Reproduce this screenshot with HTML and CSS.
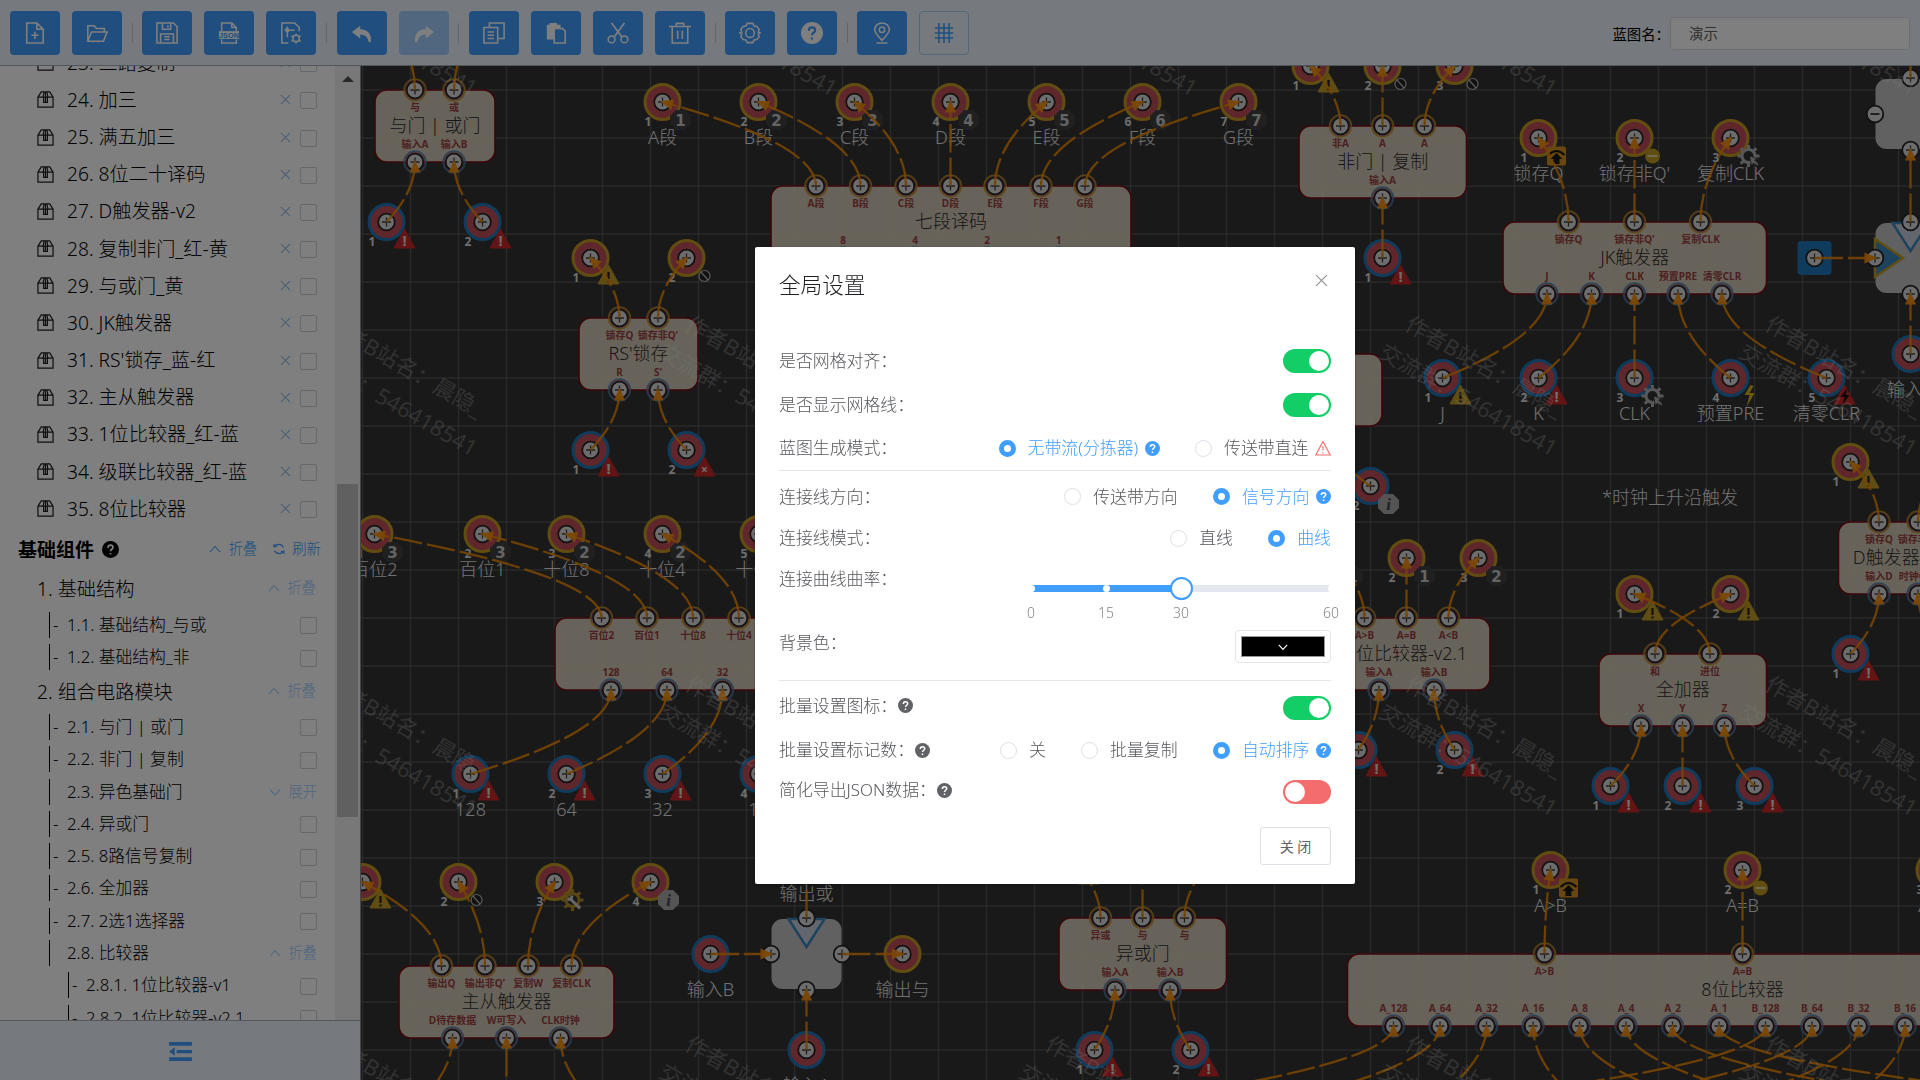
FILE: index.html
```html
<!DOCTYPE html>
<html lang="zh-CN">
<head>
<meta charset="utf-8">
<title>蓝图编辑器</title>
<link rel="stylesheet" href="styles.css">
</head>
<body>
<svg class="sprite" aria-hidden="true">
  <symbol id="i-new" viewBox="0 0 24 24"><path d="M14 1H3v22h18V8zM14 1v7h7M12 10.500v8M8 14.500h8"/></symbol>
  <symbol id="i-open" viewBox="0 0 24 24"><path d="M2 21V4h7l2.500 3H20v4M2 21h17l4-10H6z"/></symbol>
  <symbol id="i-save" viewBox="0 0 24 24"><path d="M1 1h18l4 4v18H1zM7 1v7h9V1M13 3.500v2.500M5 23v-10h14v10M9 16h6M9 19h6"/></symbol>
  <symbol id="i-json" viewBox="0 0 24 24"><path d="M4 10V1h11l5 5v4M15 1v5h5M4 19v4h16v-4"/><path class="solid" d="M1 10h22v8.500H1z"/><text class="json" x="12" y="17" text-anchor="middle">JSON</text></symbol>
  <symbol id="i-sets" viewBox="0 0 24 24"><path d="M9 23H2V1h14l5 5v4M8 5v12M9 9h7M5 9h2"/><circle cx="8" cy="9" r="1.500"/><circle cx="17.500" cy="18" r="3.500"/><path d="M17.500 12.500v2M17.500 21.500v2M12.500 15l2 1.200M20.500 19.800l2 1.200M12.500 21l2-1.200M20.500 16.200l2-1.200"/></symbol>
  <symbol id="i-undo" viewBox="0 0 24 24"><path class="solid" d="M10 4L1 11l9 7v-4.500c6 0 8 3 9.500 8.500h2C23 14 19 8 10 8z"/></symbol>
  <symbol id="i-redo" viewBox="0 0 24 24"><path class="solid" d="M14 4l9 7-9 7v-4.500c-6 0-8 3-9.500 8.500h-2C1 14 5 8 14 8z"/></symbol>
  <symbol id="i-copy" viewBox="0 0 24 24"><path d="M1 6h15v17H1zM7 6V1h16v17h-7M5 11h7M5 14.500h7M5 18h7"/></symbol>
  <symbol id="i-paste" viewBox="0 0 24 24"><path class="solid" d="M2 3h3V1h8v2h4v3.500h-7V19H2z"/><path d="M10 7h9l3 3v13H10z"/></symbol>
  <symbol id="i-cut" viewBox="0 0 24 24"><path d="M5 1l11 15M19 1L8 16"/><circle cx="5" cy="19" r="3.700"/><circle cx="19" cy="19" r="3.700"/></symbol>
  <symbol id="i-trash" viewBox="0 0 24 24"><path d="M0 5h24M8 5V1.500h8V5M3.500 5v18h17V5M9.500 9.500v9M14.500 9.500v9"/></symbol>
  <symbol id="i-gear" viewBox="0 0 24 24"><path d="M9 1.500h6l1.500 3 3 .5L22 8l-1 3 2 1-2 1 1 3-2.500 3-3 .5-1.500 3H9l-1.500-3-3-.5L2 16l1-3-2-1 2-1-1-3 2.500-3 3-.5z"/><ellipse cx="12" cy="12" rx="4.700" ry="5"/></symbol>
  <symbol id="i-help" viewBox="0 0 24 24"><circle class="solid" cx="12" cy="12" r="12"/><path class="cut" d="M8.500 9.500c0-5 7-4.500 7-.5 0 2.500-3.500 2.800-3.500 5.500M12 16.800v2.400"/></symbol>
  <symbol id="i-pin" viewBox="0 0 24 24"><path d="M12 20C7 15 4 12 4 8.500a8 7.500 0 0 1 16 0C20 12 17 15 12 20zM6 23h12"/><circle cx="12" cy="8.500" r="3"/></symbol>
  <symbol id="i-grid" viewBox="0 0 24 24"><path d="M2 6.500h20M2 12h20M2 17.500h20M6.500 1v22M12 1v22M17.500 1v22"/></symbol>
  <symbol id="i-box" viewBox="0 0 18 18"><path d="M1 6.500L4.500 1h9L17 6.500V17H1zM1 6.500h16M6.500 6.500L7.500 1M11.500 6.500l-1-5.500M7 6.500v5.500h4V6.500M9 1v11"/></symbol>
  <symbol id="i-x" viewBox="0 0 12 12"><path d="M1 1l10 10M11 1L1 11"/></symbol>
  <symbol id="i-up" viewBox="0 0 12 12"><path d="M1 9l5-5.500L11 9"/></symbol>
  <symbol id="i-down" viewBox="0 0 12 12"><path d="M1 3.500L6 9l5-5.500"/></symbol>
  <symbol id="i-refresh" viewBox="0 0 12 12"><path d="M1 1v3.500M1 4.500a5.200 5.200 0 0 1 9.500 0M1 3.500h3M11 11V7.500M11 7.500a5.200 5.200 0 0 1-9.500 0M11 8.500H8"/></symbol>
  <symbol id="i-warn" viewBox="0 0 16 16"><path d="M8 1.500L15.200 15H.8zM8 6v4.500M8 12v1.200"/></symbol>
  <symbol id="i-fold" viewBox="0 0 24 20"><path class="solid" d="M0 0h24v4H0zM8 8.300h16v3.500H8zM0 16h24v4H0zM0 10l6-4.500v9z"/></symbol>
</svg>

<div class="app">
  <header class="toolbar">
    <div class="tools" id="tools"></div>
    <label class="name">蓝图名：<span class="name-input">演示</span></label>
  </header>
  <main class="main">
    <aside class="sidebar">
      <div class="side-body">
        <div class="list" id="list"></div>
        <div class="scroll"><span class="scroll-up"></span><span class="scroll-thumb"></span></div>
      </div>
      <footer class="side-foot"><svg class="fold"><use href="#i-fold"/></svg></footer>
    </aside>
    <svg class="board" id="board" viewBox="361 66 1559 1014"></svg>
  </main>
</div>

<div class="overlay">
  <section class="dialog">
    <div class="dlg-head"><h2>全局设置</h2><svg class="close"><use href="#i-x"/></svg></div>
    <div class="row r1"><span class="lab">是否网格对齐：</span><span class="switch"></span></div>
    <div class="row r2"><span class="lab">是否显示网格线：</span><span class="switch"></span></div>
    <div class="row r3"><span class="lab">蓝图生成模式：</span>
      <div class="opts">
        <span class="opt on"><i></i>无带流(分拣器)<svg class="q"><use href="#i-help"/></svg></span>
        <span class="opt"><i></i>传送带直连<svg class="w"><use href="#i-warn"/></svg></span>
      </div></div>
    <hr>
    <div class="row r4"><span class="lab">连接线方向：</span>
      <div class="opts">
        <span class="opt"><i></i>传送带方向</span>
        <span class="opt on"><i></i>信号方向<svg class="q"><use href="#i-help"/></svg></span>
      </div></div>
    <div class="row r5"><span class="lab">连接线模式：</span>
      <div class="opts"><span class="opt"><i></i>直线</span><span class="opt on"><i></i>曲线</span></div></div>
    <div class="row r6"><span class="lab">连接曲线曲率：</span>
      <div class="slider">
        <div class="track"><div class="fill"></div><b class="s0"></b><b class="s15"></b><b class="s60"></b><em></em></div>
        <div class="marks"><span>0</span><span>15</span><span>30</span><span>60</span></div>
      </div></div>
    <div class="row r7"><span class="lab">背景色：</span><span class="picker"><span class="swatch"><svg><use href="#i-down"/></svg></span></span></div>
    <hr>
    <div class="row r8"><span class="lab">批量设置图标：<svg class="q"><use href="#i-help"/></svg></span><span class="switch"></span></div>
    <div class="row r9"><span class="lab">批量设置标记数：<svg class="q"><use href="#i-help"/></svg></span>
      <div class="opts">
        <span class="opt"><i></i>关</span><span class="opt"><i></i>批量复制</span>
        <span class="opt on"><i></i>自动排序<svg class="q"><use href="#i-help"/></svg></span>
      </div></div>
    <div class="row r10"><span class="lab">简化导出JSON数据：<svg class="q"><use href="#i-help"/></svg></span><span class="switch off"></span></div>
    <div class="dlg-foot"><button class="btn">关 闭</button></div>
  </section>
</div>
<script src="app.js"></script>
</body>
</html>
```
FILE: styles.css
```css
* { box-sizing: border-box; }
body {
  margin: 0;
  font-family: "Noto Sans", "Noto Sans CJK SC", sans-serif;
  font-weight: 300;
  color: #000;
  overflow: hidden;
}
.sprite { position: absolute; width: 0; height: 0; }
svg { fill: none; stroke: currentColor; stroke-width: 1.7; flex: none; --cut: #fff; }
.solid { fill: currentColor; stroke: none; }
.cut { stroke: var(--cut); stroke-width: 2.400; }
.json { font: bold 8px "Liberation Sans", sans-serif; fill: #409eff; stroke: none; }
.app { display: flex; flex-direction: column; width: 1920px; height: 1080px; }

/* toolbar */
.toolbar {
  height: 66px; flex: none; display: flex; justify-content: space-between; align-items: center;
  padding: 1px 10px 0; background: #ecf2fc; border-bottom: 1px solid #a4acb6;
}
.tools { display: flex; }
.tool {
  width: 50px; height: 44px; border-radius: 4px; background: #409eff; color: #fff;
  display: flex; align-items: center; justify-content: center;
}
.tool + .tool { margin-left: 12px; }
.tool svg { width: 22px; height: 22px; --cut: #409eff; }
.tool.disabled { background: #a0cfff; }
.tool.plain { background: #ecf5ff; border: 1px solid #a8d0fa; color: #409eff; }
.sep { width: 20.3px; display: flex; align-items: center; justify-content: center; }
.sep::before { content: ""; width: 1px; height: 20px; background: #c4cad2; }
.name { display: flex; align-items: center; font-size: 14.400px; font-weight: 400; }
.name-input {
  width: 240px; height: 33px; padding: 0 18px; line-height: 31px; border: 1px solid #dcdfe6;
  border-radius: 4px; background: #fff; color: #606266;
}

/* sidebar */
.main { display: flex; flex: 1; min-height: 0; }
.sidebar { width: 361px; flex: none; display: flex; flex-direction: column; background: #fff; border-right: 1px solid #8b8f98; }
.side-body { height: 954px; display: flex; overflow: hidden; }
.list { width: 335px; margin-top: -21.800px; flex: none; }
.scroll { flex: 1; background: #f1f1f1; display: flex; flex-direction: column; align-items: center; }
.scroll-up { margin-top: 10px; border: 6px solid transparent; border-top: 0; border-bottom: 6px solid #505050; }
.scroll-thumb { margin-top: 402px; width: 21px; height: 333px; background: #c1c1c1; }
.item { height: 37.170px; display: flex; align-items: center; padding: 0 18px 0 37px; font-size: 19.200px; line-height: 30px; white-space: pre; }
.item .pkg { width: 17px; height: 17px; margin-right: 13px; color: #202020; stroke-width: 1.3; }
.item .grow, .sub .grow, .group .grow, .title .grow { flex: 1; }
.item .del { width: 11px; height: 11px; color: #8fbce8; margin-right: 9px; stroke-width: 1.1; }
.check { width: 17px; height: 17px; border: 1px solid #cbced6; border-radius: 2px; background: #fff; }
.item .check, .sub .check { margin-top: 2px; }
.title { height: 44px; padding: 0 14px 0 18px; display: flex; align-items: center; font-size: 19px; font-weight: bold; }
.title .th { width: 17px; height: 17px; margin-left: 8px; color: #000; }
.title .act { color: #409eff; font-weight: 300; margin-left: 16px; }
.act { display: flex; align-items: center; gap: 7px; font-size: 14.400px; color: #9ccdff; line-height: 20px; }
.act svg { width: 12px; height: 12px; stroke-width: 1.1; }
.group { height: 37.5px; padding: 0 19px 3px 37px; display: flex; align-items: center; font-size: 19.200px; }
.sub { height: 32.3px; display: flex; align-items: center; padding-right: 18px; padding-left: 49px; font-size: 16.800px; line-height: 26px; white-space: pre; }
.sub.deep { padding-left: 68px; }
.sub .bar { height: 26px; width: 18px; border-left: 1px solid #000; padding-left: 3px; }
.side-foot { flex: 1; background: #ecf2fc; border-top: 1px solid #a8aeb8; display: flex; align-items: center; justify-content: center; padding-top: 1px; color: #409eff; }
.fold { width: 23px; height: 19px; }

/* board */
.board { flex: 1; width: 1559px; height: 1014px; background: #323232; display: block; }
.board text { stroke: none; text-anchor: middle; }
.gridline { stroke: #525252; stroke-width: 1.5; }
.card { fill: #d6ccb9; fill-opacity: .97; stroke: #7c0810; stroke-width: 1.6; }
.card-title { font-size: 18px; fill: #2c2c2c; }
.port-label { font-size: 10px; font-weight: bold; fill: #984040; }
.caption { font-size: 18px; fill: #e4e4e4; }
.num { font-size: 12px; font-weight: bold; fill: #dcdcdc; }
.wire { stroke: #f08a04; stroke-width: 2.300; stroke-opacity: .88; stroke-dasharray: 28.5 5; }
.arrow { fill: #f59010; fill-opacity: .95; stroke: none; }
.mark { font-size: 22px; font-weight: 400; fill: #fff; fill-opacity: .25; }
.board .mark { text-anchor: start; }

/* dialog */
.overlay { position: fixed; inset: 0; background: rgba(0, 0, 0, .5); display: flex; justify-content: center; align-items: flex-start; padding: 247px 0 0 190px; }
.dialog { width: 600px; height: 637px; background: #fff; border-radius: 2px; padding: 0 24px; color: #55575b; font-size: 16.900px; box-shadow: 0 1px 3px rgba(0, 0, 0, .3); }
.dlg-head { display: flex; justify-content: space-between; height: 92px; padding-top: 23px; }
h2 { margin: 0; font-size: 21.600px; line-height: 30px; font-weight: 300; color: #202124; }
.close { width: 13px; height: 13px; margin: 4px 3px 0 0; color: #909399; stroke-width: 1.1; }
.row { display: flex; justify-content: space-between; align-items: center; white-space: nowrap; line-height: 24px; }
.lab { display: flex; align-items: center; }
.lab .q { color: #606266; margin-left: 1px; }
.q { width: 15px; height: 15px; }
.r1 { height: 43.600px; padding-bottom: 0; }
.r2 { height: 44.600px; }
.r3 { height: 42.600px; }
.r4 { height: 52px; }
.r5 { height: 31px; }
.r6 { height: 70px; align-items: flex-start; padding-top: 13px; }
.r7 { height: 56px; }
.r7 .lab { margin-top: -18px; }
.r7 .picker { margin-top: -10px; }
.r8 { height: 54px; }
.r8 .lab { margin-top: -4px; }
.r9 { height: 31px; }
.r10 { height: 52px; }
.r10 .lab { margin-top: -3px; }
hr { border: 0; height: 1px; background: #e4e6ea; margin: 0; }
.switch { width: 48px; height: 24px; border-radius: 12px; background: #13ce66; display: flex; justify-content: flex-end; padding: 2px; }
.switch::before { content: ""; width: 20px; height: 20px; border-radius: 50%; background: #fff; }
.switch.off { background: #f56c6c; justify-content: flex-start; }
.opts { display: flex; gap: 35.500px; }
.opt { display: flex; align-items: center; }
.opt i { width: 17px; height: 17px; border: 1px solid #dcdfe6; border-radius: 50%; margin-right: 11.800px; }
.opt.on { color: #409eff; }
.opt.on i { border: 5.500px solid #409eff; }
.opt svg { margin-left: 6.500px; }
.w { width: 16px; height: 16px; color: #f56c6c; stroke-width: 1.100; }
.slider { width: 300px; }
.track { height: 7px; background: #e4e7ed; border-radius: 3px; position: relative; margin-top: 18px; }
.fill { height: 7px; width: 50%; background: #409eff; border-radius: 3px 0 0 3px; }
.track b { position: absolute; top: 0; width: 7px; height: 7px; margin-left: -3.500px; border-radius: 50%; background: #fff; }
.s0 { left: 0; } .s15 { left: 25%; } .s60 { left: 100%; }
.track em { position: absolute; left: 50%; top: -8px; width: 23px; height: 23px; margin-left: -11.500px; border: 2px solid #409eff; border-radius: 50%; background: #fff; }
.marks { display: grid; grid-template-columns: 75px 75px 150px 0; font-size: 14px; color: #808388; line-height: 20px; margin-top: 11px; }
.marks span { width: 30px; margin-left: -15px; text-align: center; }
.picker { width: 96px; height: 33px; border: 1px solid #e4e6ea; border-radius: 4px; padding: 5px; display: flex; }
.swatch { flex: 1; background: #000; border: 1px solid #999; display: flex; align-items: center; justify-content: center; color: #fff; }
.swatch svg { width: 10px; height: 10px; stroke-width: 1.400; }
.dlg-foot { display: flex; justify-content: flex-end; padding-top: 9px; }
.btn { width: 71px; height: 38px; border: 1px solid #dcdfe6; border-radius: 3px; background: #fff; color: #606266; font: 14px "Noto Sans", "Noto Sans CJK SC", sans-serif; padding: 0; }
```
FILE: app.js
```js
const use = (id, cls = '') => `<svg class="${cls}"><use href="#i-${id}"/></svg>`;

document.getElementById('tools').innerHTML = [
  ['new', 'open'], ['save', 'json', 'sets'], ['undo', 'redo'],
  ['copy', 'paste', 'cut', 'trash'], ['gear', 'help'], ['pin', 'grid']
].map(g => g.map(t =>
  `<span class="tool${t === 'redo' ? ' disabled' : t === 'grid' ? ' plain' : ''}">${use(t)}</span>`
).join('')).join('<span class="sep"></span>');

const packages = ['三路复制', '加三', '满五加三', '8位二十译码', 'D触发器-v2', '复制非门_红-黄', '与或门_黄',
  'JK触发器', "RS'锁存_蓝-红", '主从触发器', '1位比较器_红-蓝', '级联比较器_红-蓝', '8位比较器'];
const act = (icon, label) => `<span class="act">${use(icon)}${label}</span>`;
const check = '<span class="check"></span>', grow = '<span class="grow"></span>';
const group = t => `<div class="group">${t}${grow}${act('up', '折叠')}</div>`;
const sub = (t, o = {}) => `<div class="sub${o.deep ? ' deep' : ''}"><span class="bar">${o.act ? '' : '-'}</span>${t}${grow}${o.act || check}</div>`;
document.getElementById('list').innerHTML =
  packages.map((p, i) => `<div class="item">${use('box', 'pkg')}${i + 23}. ${p}${grow}${use('x', 'del')}${check}</div>`).join('') +
  `<div class="title">基础组件${use('help', 'th')}${grow}${act('up', '折叠')}${act('refresh', '刷新')}</div>` +
  group('1. 基础结构') + sub('1.1. 基础结构_与或') + sub('1.2. 基础结构_非') +
  group('2. 组合电路模块') + sub('2.1. 与门 | 或门') + sub('2.2. 非门 | 复制') +
  sub('2.3. 异色基础门', { act: act('down', '展开') }) + sub('2.4. 异或门') + sub('2.5. 8路信号复制') +
  sub('2.6. 全加器') + sub('2.7. 2选1选择器') + sub('2.8. 比较器', { act: act('up', '折叠') }) +
  sub('2.8.1. 1位比较器-v1', { deep: 1 }) + sub('2.8.2. 1位比较器-v2.1', { deep: 1 });

/* ---------- board ---------- */
const esc = s => String(s).replace(/&/g, '&amp;').replace(/</g, '&lt;').replace(/>/g, '&gt;');
const text = (x, y, s, cls, size) => `<text class="${cls}" x="${x}" y="${y + size * .35}">${esc(s)}</text>`;
const cards = [], nodes = [], wires = [];

const plus = (x, y, minus) => `<circle cx="${x}" cy="${y}" r="8.300" fill="#dadada" stroke="#242424" stroke-width="1.800"/>` +
  `<path d="M${x - 4.5} ${y}h9${minus ? '' : `M${x} ${y - 4.5}v9`}" stroke="#404040" stroke-width="${minus ? 2 : 1.3}"/>`;

const gearPath = (x, y, r) => {
  let d = '';
  for (let i = 0; i < 8; i++) {
    const a = i * Math.PI / 4, c = Math.cos(a), s = Math.sin(a);
    d += `M${x + c * r * .6} ${y + s * r * .6}L${x + c * r} ${y + s * r}`;
  }
  return d;
};
const octagon = (x, y, fill) => `<path d="M${x - 4.5} ${y - 10}h9l6 6v8l-6 6h-9l-6-6v-8z" fill="${fill}" stroke="none"/>`;
const badges = {
  err: (x, y, t = '!') => `<path d="M${x} ${y - 11}l10.500 19h-21z" fill="#c82828" stroke="#c82828" stroke-width="1"/>` +
    (t === 'bolt' ? `<path d="M${x + 3} ${y - 8}l-7 9h4l-2 8 7-10h-4z" fill="#111" stroke="none"/>` :
      `<text class="num" x="${x}" y="${y + 6}" style="font-size:${t === '!' ? 15 : 12}px">${t}</text>`),
  errx: (x, y) => badges.err(x, y, '×'),
  errbolt: (x, y) => badges.err(x, y, 'bolt'),
  warn: (x, y) => `<path d="M${x} ${y - 11}l10.500 19h-21z" fill="#c09a28" stroke="#c09a28" stroke-width="1"/><path d="M${x} ${y - 4}v7M${x} ${y + 4.500}v2" stroke="#222" stroke-width="2.200"/>`,
  ban: (x, y) => `<circle cx="${x}" cy="${y}" r="5.500" fill="#222" stroke="#bbb" stroke-width="1.200"/><path d="M${x - 3.500} ${y - 4}l7 8" stroke="#bbb" stroke-width="1.200"/>`,
  up: (x, y) => `<rect x="${x - 9.500}" y="${y - 9.500}" width="19" height="19" rx="2" fill="#d09020" stroke="none"/><path d="M${x - 8} ${y - 1}q8-8 16 0" stroke="#181818" stroke-width="2"/><path d="M${x} ${y - 3}l6 6h-3v5h-6v-5h-3z" fill="#181818" stroke="none"/>`,
  minus: (x, y) => `<circle cx="${x}" cy="${y}" r="7.500" fill="#c09a20" stroke="none"/><path d="M${x - 5} ${y}h10" stroke="#e8dca8" stroke-width="1.800"/>`,
  gear: (x, y) => `<circle cx="${x}" cy="${y}" r="6.500" stroke="#b0b0b0" stroke-width="3"/><path d="${gearPath(x, y, 11)}" stroke="#b0b0b0" stroke-width="3"/><path d="M${x + 1} ${y}l2 10 2-3 4 3 1-2-4-4 4-1z" fill="#b0b0b0" stroke="#303030" stroke-width=".8"/>`,
  wrench: (x, y) => `<circle cx="${x}" cy="${y}" r="6.500" stroke="#b08c28" stroke-width="3"/><path d="${gearPath(x, y, 11)}" stroke="#b08c28" stroke-width="3"/><path d="M${x - 5} ${y - 1}l3.500 .5 1-4M${x - 1.500} ${y - .5}l9 9" stroke="#d0d0d0" stroke-width="3"/>`,
  bolt: (x, y) => `<path d="M${x + 2} ${y - 11}l-6 10h5l-3 12 8-14h-5l4-7z" fill="#dcb41e" stroke="none"/>`,
  info: (x, y) => octagon(x, y, '#a8a8a8') + `<text x="${x}" y="${y + 6}" fill="#444" style="font:italic bold 17px 'Liberation Serif',serif">i</text>`,
  digit: (x, y, d) => octagon(x, y, '#404040') + `<text x="${x}" y="${y + 5.500}" fill="#c8c8c8" style="font:bold 15px 'DejaVu Sans',sans-serif">${d}</text>`
};

function tag(x, y, color, n, badge, cap) {
  nodes.push(`<circle cx="${x}" cy="${y}" r="17.500" fill="#bf4c56" stroke="${color === 'y' ? '#c29a20' : '#1e78b8'}" stroke-width="3"/>` + plus(x, y) +
    (n ? text(x - 14.5, y + 20, n, 'num', 12) : '') +
    (badge ? (badges[badge] ? badges[badge](x + 18, y + 18) : badges.digit(x + 18, y + 18, badge)) : '') +
    (cap ? text(x, y + 36, cap, 'caption', 18) : ''));
}
function wire(x1, y1, x2, y2, cx, cy) {
  let dx = x2 - cx, dy = y2 - cy; const l = Math.hypot(dx, dy) || 1; dx /= l; dy /= l;
  const tx = x2 + dx * 2.5, ty = y2 + dy * 2.5, bx = tx - dx * 13, by = ty - dy * 13;
  wires.push(`<path class="wire" d="M${x1} ${y1}Q${cx} ${cy} ${x2} ${y2}"/><path class="arrow" d="M${tx} ${ty}L${bx - dy * 5.5} ${by + dx * 5.5}L${bx + dy * 5.5} ${by - dx * 5.5}z"/>`);
}
/* a card with ports on its upper and lower edges; each port is [portX, label, tagX, badge, caption] */
function card(x1, x2, y, title, top, ty, bottom, by) {
  cards.push(`<rect class="card" x="${x1}" y="${y}" width="${x2 - x1}" height="72" rx="12"/>` + text((x1 + x2) / 2, y + 36, title, 'card-title', 18));
  const port = (x, py, c, label, dy) => nodes.push(
    `<circle cx="${x}" cy="${py}" r="11" fill="#a04a50" fill-opacity=".65" stroke="${c}" stroke-opacity=".75" stroke-width="1.500"/>` + plus(x, py) + text(x, py + dy, label, 'port-label', 10));
  top.forEach((p, i) => {
    port(p[0], y, '#c29a20', p[1], 17.5);
    if (p[2]) { tag(p[2], ty, 'y', i + 1, p[3], p[4]); wire(p[0], y, p[2], ty, p[0], (y + ty) / 2); }
  });
  bottom.forEach((p, i) => {
    port(p[0], y + 72, '#3c86be', p[1], -18);
    if (p[2]) { tag(p[2], by, 'b', i + 1, p[3], p[4]); wire(p[2], by, p[0], y + 72, p[0], (y + 72 + by) / 2); }
  });
}

card(375, 495, 90, '与门 | 或门', [[415, '与', 386.500], [454, '或', 482.500]], 18, [[415, '输入A', 386.500, 'err'], [454, '输入B', 482.500, 'err']], 222);
card(771, 1131, 186, '七段译码', [[816, 'A段', 662.500, '1', 'A段'], [860.500, 'B段', 758.500, '2', 'B段'], [906, 'C段', 854.500, '3', 'C段'], [950.500, 'D段', 950.500, '4', 'D段'],
  [995, 'E段', 1046.500, '5', 'E段'], [1041, 'F段', 1142.500, '6', 'F段'], [1085, 'G段', 1238.500, '7', 'G段']], 102, [[843, '8'], [915, '4'], [987, '2'], [1058.500, '1']], 354);
card(579, 698, 318, "RS'锁存", [[619.500, '锁存Q', 590.500, 'warn'], [658, "锁存非Q'", 686.500, 'ban']], 258, [[619.500, 'R', 590.500, 'err'], [658, "S'", 686.500, 'errx']], 450);
card(1299, 1466.500, 126, '非门 | 复制', [[1340.500, '非A', 1310.500, 'warn'], [1382.500, 'A', 1382.500, 'ban'], [1424.500, 'A', 1454.500, 'ban']], 66, [[1382.500, '输入A', 1382.500, 'err']], 258);
card(1503, 1766.500, 222, 'JK触发器', [[1568.500, '锁存Q', 1538.500, 'up', '锁存Q'], [1634.500, "锁存非Q'", 1634.500, 'minus', "锁存非Q'"], [1700.500, '复制CLK', 1730.500, 'gear', '复制CLK']], 138,
  [[1547, 'J', 1442.500, 'warn', 'J'], [1591.500, 'K', 1538.500, 'err', 'K'], [1634.500, 'CLK', 1634.500, 'gear', 'CLK'], [1678, '预置PRE', 1730.500, 'bolt', '预置PRE'], [1722, '清零CLR', 1826.500, 'errbolt', '清零CLR']], 378);
card(1215, 1382, 354, '', [], 0, [[1270, '', 1275, 'err'], [1326, '', 1370.500, 'info']], 486);
card(1323, 1490, 618, '1位比较器-v2.1', [[1364.500, 'A>B', 1334.500, '1'], [1406.500, 'A=B', 1406.500, '1'], [1448.500, 'A<B', 1478.500, '2']], 558, [[1379, '输入A', 1358.500, 'err'], [1434, '输入B', 1454.500, 'err']], 750);
card(1599, 1766.500, 654, '全加器', [[1710, '进位', 1634.500, 'warn'], [1655, '和', 1730.500, 'warn']], 594, [[1641, 'X', 1610.500, 'err'], [1682.500, 'Y', 1682.500, 'err'], [1724.500, 'Z', 1754.500, 'err']], 786);
card(1838.500, 1958.500, 522, 'D触发器-v2', [[1879, '锁存Q', 1850.500, 'warn'], [1918, "锁存非Q'", 1946.500, 'ban']], 462, [[1879, '输入D', 1850.500, 'err'], [1918, '时钟CLK', 1946.500, 'err']], 654);
card(555, 915, 618, '', [[601.500, '百位2', 374.500, '3', '百位2'], [647, '百位1', 482.500, '3', '百位1'], [693, '十位8', 566.500, '2', '十位8'], [739, '十位4', 662.500, '2', '十位4'], [785, '', 758.500, '2', '十位2']], 534,
  [[611, '128', 470.500, 'err', '128'], [667, '64', 566.500, 'err', '64'], [722.500, '32', 662.500, 'err', '32'], [778, '', 758.500, 'err', '16']], 774);
card(399, 614, 966, '主从触发器', [[441.500, '输出Q', 362.500, 'warn'], [485, "输出非Q'", 458.500, 'ban'], [528, '复制W', 554.500, 'wrench'], [571.500, '复制CLK', 650.500, 'info']], 882,
  [[452.500, 'D待存数据', 410.500, 'warn'], [506.500, 'W可写入', 506.500, 'err'], [560.500, 'CLK时钟', 602.500, 'gear']], 1110);
card(1059, 1226.500, 918, '异或门', [[1100.500, '异或', 1070.500, 'warn'], [1142.500, '与', 1142.500, 'ban'], [1184.500, '与', 1214.500, 'ban']], 858, [[1115, '输入A', 1094.500, 'err'], [1170, '输入B', 1190.500, 'err']], 1050);
const bits = ['A_128', 'A_64', 'A_32', 'A_16', 'A_8', 'A_4', 'A_2', 'A_1', 'B_128', 'B_64', 'B_32', 'B_16', 'B_8'];
const from = [1022, 1214, 1406, 1598, 1740, 1850, 2080, 2270, 1310, 1502, 1670, 1820, 2078];
card(1347.500, 2137.500, 954, '8位比较器', [[1544.500, 'A>B', 1550.500, 'up', 'A>B'], [1742.500, 'A=B', 1742.500, 'minus', 'A=B'], [1940, 'A<B', 1934.500, 'gear', 'A<B']], 870,
  bits.map((b, i) => [1393.500 + i * 46.5, b, from[i]]), 1116);

/* splitters */
const block = (x, y) => cards.push(`<rect x="${x - 35}" y="${y - 35}" width="70" height="70" rx="11" fill="#c2c2c2" stroke="none"/>`);
const notch = (x, y) => cards.push(`<path d="M${x - 18} ${y}h36l-18 28z" fill="#c8cdda" stroke="#3c86be" stroke-width="2.500"/>`);
block(806.5, 954); notch(806.5, 919);
block(1910.5, 114); block(1910.5, 258); notch(1910.5, 223);
cards.push('<path d="M1875 239v38l28-19z" fill="#3c86be" stroke="#c29a20" stroke-width="2.500"/>',
  '<rect x="1797.500" y="241" width="34" height="34" rx="4" fill="#1e78b8" stroke="none"/>');
const straight = (a, b, c, d) => wire(a, b, c, d, (a + c) / 2, (b + d) / 2);
tag(710.5, 954, 'b', '', '', '输入B'); tag(902.5, 954, 'y', '', '', '输出与');
tag(806.5, 1050, 'b', '', '', '输入A'); tag(806.5, 858, 'y', '', '', '输出或');
tag(1910.5, 354, 'b', '', '', '输入A');
[[771, 954], [842, 954], [806.5, 918], [806.5, 990], [1814.5, 258], [1875, 258], [1910.5, 222], [1910.5, 294], [1910.5, 78], [1910.5, 150]].forEach(p => nodes.push(plus(...p)));
nodes.push(plus(1875, 114, true));
straight(710.5, 954, 771, 954); straight(842, 954, 902.5, 954); straight(806.5, 1050, 806.5, 990); straight(806.5, 918, 806.5, 858);
straight(1814.5, 258, 1875, 258); straight(1910.5, 354, 1910.5, 294); straight(1910.5, 222, 1910.5, 150); straight(1910.5, 78, 1910.5, 18);
nodes.push(text(1670, 498, '*时钟上升沿触发', 'caption', 18));

let grid = '', marks = '';
for (let x = 362.5; x < 1920; x += 48) grid += `M${x} 66V1080`;
for (let y = 90; y < 1080; y += 48) grid += `M361 ${y}H1920`;
for (let i = -1; i < 5; i++) for (let j = -1; j < 3; j++) {
  const x = 324 + i * 360, y = 328 + j * 360;
  marks += `<g transform="translate(${x} ${y}) rotate(30)"><text class="mark" x="0" y="1">作者B站名：晨隐_</text><text class="mark" x="-9" y="38">交流群：546418541</text></g>`;
}
document.getElementById('board').innerHTML =
  `<path class="gridline" d="${grid}"/>` + cards.join('') + nodes.join('') + wires.join('') + marks;
```
